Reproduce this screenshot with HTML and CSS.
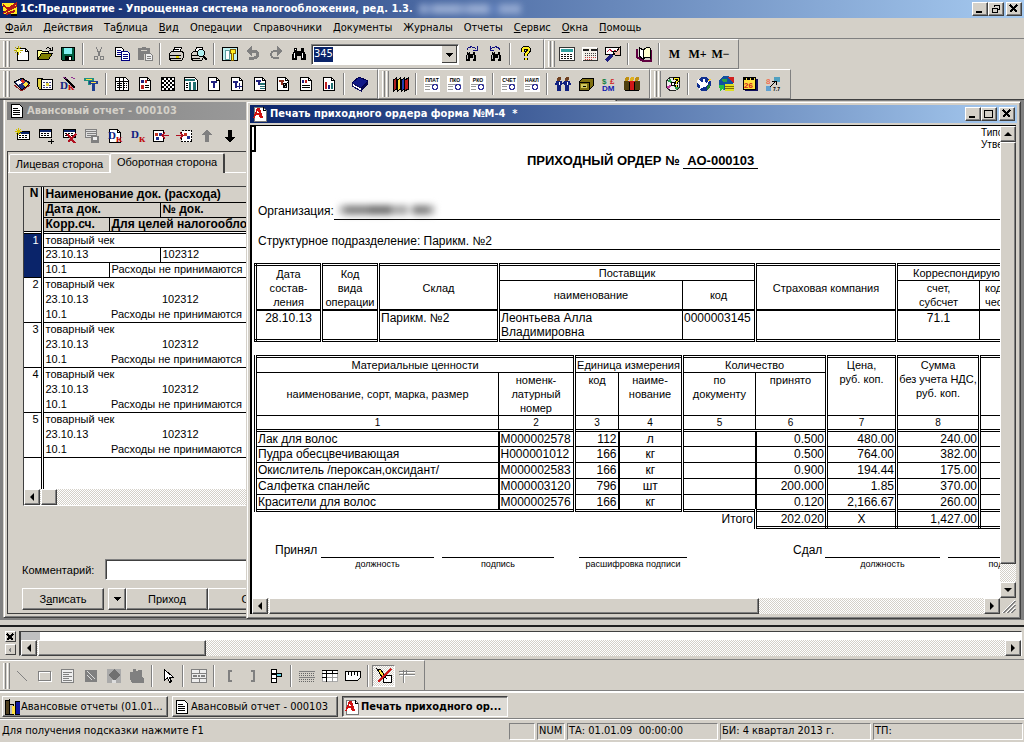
FILE: index.html
```
<!DOCTYPE html>
<html lang="ru">
<head>
    <meta charset="UTF-8">
    <meta name="viewport" content="width=device-width, initial-scale=1.0">
    <title>1С:Предприятие</title>
    <link rel="stylesheet" href="styles.css">
</head>
<body>
    <!-- Shared icon shapes -->
    <svg class="defs" aria-hidden="true">
        <symbol id="page" viewBox="0 0 16 16"><path d="M2.500 1.500h8l3 3v10h-11z" fill="#fff" stroke="#000"/><path d="M10.500 1.500v3h3" fill="none" stroke="#000"/></symbol>
        <symbol id="binoc" viewBox="0 0 16 16"><path d="M3 2h3v3h4V2h3v3l2 4v5h-5v-4H6v4H1V9l2-4z" fill="#000"/><path d="M3 7v5M11 7v5M4.500 3v1" stroke="#fff"/></symbol>
        <symbol id="acc" viewBox="0 0 16 16"><path d="M2 1h9l3 3v11H2z" fill="#fff" stroke="#777"/><path d="M1 12 5 2h3l3 10H8l-1-3H4l-1 3z" fill="#d01010"/><path d="M5 7h2L6 4z" fill="#fff"/><path d="M11 1v3h3" fill="none" stroke="#000"/></symbol>
        <symbol id="lines" viewBox="0 0 16 16"><path d="M2.500 1.500h8l3 3v10h-11z" fill="#fff" stroke="#000"/><path d="M4 5.500h5M4 7.500h7M4 9.500h7M4 11.500h7" stroke="#000"/></symbol>
        <symbol id="rows" viewBox="0 0 16 16"><path d="M2.500 3.500h12v8h-12z" fill="#fff" stroke="#000"/><path d="M3 4.500h11" stroke="#0a246a" stroke-width="2"/><path d="M4 7.500h9M4 9.500h9" stroke="#000" stroke-dasharray="2 1"/></symbol>
        <symbol id="form" viewBox="0 0 16 16"><path d="M0 0h16v16H0z" fill="#fff"/><path d="M1 8.500h13M1 10.500h5M1 13.500h5" stroke="#999"/><circle cx="11" cy="11" r="2.500" fill="#fff" stroke="#33339a" stroke-width="1.500"/></symbol>
    </svg>

    <!-- Main title -->
    <header class="titlebar main-title">
        <svg class="ico" viewBox="0 0 16 16"><path d="M0 2h15v11H2z" fill="#ffe920"/><path d="m1 4 5 4 9-6M1 12l6-3 8-4M4 13l9-3" stroke="#b01818" stroke-width="2" fill="none"/><path d="M9 14h6" stroke="#000" stroke-width="2"/></svg>
        <h1>1С:Предприятие - Упрощенная система налогообложения, ред. 1.3.</h1>
        <span class="smudge light"></span>
        <div class="win-btns">
            <button aria-label="Свернуть"><svg viewBox="0 0 12 10"><path d="M2 8h6" stroke="#000" stroke-width="2"/></svg></button>
            <button aria-label="Восстановить"><svg viewBox="0 0 12 10"><path d="M4.500 3V1.500h5v4H8M4 1.500h6" stroke="#000" fill="none"/><path d="M2.500 4.500h5v4h-5zM2 4h6" stroke="#000" fill="none"/></svg></button>
            <button class="close" aria-label="Закрыть"><svg viewBox="0 0 12 10"><path d="m2 1 7 7M9 1 2 8" stroke="#000" stroke-width="2"/></svg></button>
        </div>
    </header>

    <nav class="menu">
        <a href="#"><u>Ф</u>айл</a>
        <a href="#"><u>Д</u>ействия</a>
        <a href="#">Та<u>б</u>лица</a>
        <a href="#"><u>В</u>ид</a>
        <a href="#">Опе<u>р</u>ации</a>
        <a href="#">Справочники</a>
        <a href="#">Документы</a>
        <a href="#">Журналы</a>
        <a href="#">Отчеты</a>
        <a href="#"><u>С</u>ервис</a>
        <a href="#"><u>О</u>кна</a>
        <a href="#"><u>П</u>омощь</a>
    </nav>

    <!-- Standard toolbar -->
    <div class="toolbar">
        <div class="band">
            <i class="grip"></i>
            <button aria-label="Новый"><svg viewBox="0 0 16 16"><path d="M3.500 2.500h8l3 3v9h-11z" fill="#fff" stroke="#000"/><path d="M11.500 2.500v3h3" fill="none" stroke="#000"/><path d="M4 0v9M0 4h9M1 1l6 6M7 1 1 7" stroke="#b8a800"/><path d="M3 3h3v3H3z" fill="#ffff60"/></svg></button>
            <button aria-label="Открыть"><svg viewBox="0 0 16 16"><path d="M0.500 13.500v-9h4l1 1h6v2" fill="#ffff90" stroke="#000"/><path d="m0.500 13.500 4-6h11l-4 6z" fill="#808000" stroke="#000"/><path d="M9 3c1-2 4-2 5 1m1-3v3h-3" fill="none" stroke="#000"/></svg></button>
            <button aria-label="Сохранить"><svg viewBox="0 0 16 16"><path d="M1.500 1.500h13v13h-12l-1-1z" fill="#006040" stroke="#000"/><path d="M4 2h8v6H4z" fill="#80f0f0"/><path d="M5 10h7v4H5z" fill="#000"/><path d="M9 11h2v3H9z" fill="#fff"/></svg></button>
            <i class="sep"></i>
            <button aria-label="Вырезать"><svg viewBox="0 0 16 16" fill="none" stroke="#808080"><path d="m5 1 4 9M11 1 7 10"/><circle cx="5" cy="12" r="2"/><circle cx="11" cy="12" r="2"/></svg></button>
            <button aria-label="Копировать"><svg viewBox="0 0 16 16" fill="#fff" stroke="#000080"><path d="M1.500 1.500h6l2 2v7h-8z" stroke="#000"/><path d="M3 4.500h4M3 6.500h4M3 8.500h4"/><path d="M7.500 5.500h6l2 2v7h-8z"/><path d="M9 8.500h5M9 10.500h5M9 12.500h5"/></svg></button>
            <button aria-label="Вставить"><svg viewBox="0 0 16 16"><path d="M1 2h4V1h4v1h4v6H7v6H1z" fill="#808080"/><path d="M4 4h6" stroke="#d4d0c8"/><path d="M8.500 7.500h5l2 2v5h-7z" fill="#eee" stroke="#808080"/><path d="M10 10.500h4M10 12.500h4" stroke="#808080"/></svg></button>
            <i class="sep"></i>
            <button aria-label="Печать"><svg viewBox="0 0 16 16"><path d="M4.500 6.500l2-5h7l-2 5z" fill="#fff" stroke="#000"/><path d="M1.500 7.500l2-2h11l1 2v4l-2 3h-11l-1-2z" fill="#d4d0c8" stroke="#000"/><path d="M1 9.500h12M2 12.500h11M6 3.500h5" stroke="#000"/><path d="M8 11h3" stroke="#e0d000" stroke-width="2"/></svg></button>
            <button aria-label="Просмотр"><svg viewBox="0 0 16 16"><path d="M3.500 6.500l2-5h6l-2 5z" fill="#fff" stroke="#000"/><path d="M0.500 7.500l2-2h9l1 2v4l-2 3h-9l-1-2z" fill="#d4d0c8" stroke="#000"/><path d="M0 9.500h7M1 12.500h8" stroke="#000"/><circle cx="10" cy="7" r="3.500" fill="#b0f0f0" stroke="#000"/><path d="m12 10 4 4" stroke="#000" stroke-width="2"/></svg></button>
            <i class="sep"></i>
            <button aria-label="Свойства"><svg viewBox="0 0 16 16"><path d="M0.500 1.500h15v13h-15z" fill="#c0f0f0" stroke="#000"/><path d="M3 4h4v9H3z" fill="#fff" stroke="#60a0a0"/><path d="M8 3h5v4h-2v7H9V7H8z" fill="#ffee20" stroke="#806000"/></svg></button>
            <button aria-label="Отменить"><svg viewBox="0 0 16 16"><path d="M3 5h6c5 0 5 7 0 7H4" fill="none" stroke="#808080" stroke-width="3"/><path d="M7 0v10L1 5z" fill="#808080"/></svg></button>
            <button aria-label="Повторить"><svg viewBox="0 0 16 16"><path d="M12 5H7c-5 0-5 7 0 7h4" fill="none" stroke="#808080" stroke-width="2"/><path d="M9 0v10l6-5z" fill="#808080"/></svg></button>
            <button aria-label="Найти"><svg viewBox="0 0 16 16"><use href="#binoc"/></svg></button>
            <select class="find" aria-label="Поиск"><option>345</option></select>
            <button aria-label="Найти следующий"><svg viewBox="0 0 16 16"><use href="#binoc" x="1" y="4" width="12" height="12"/><path d="M3 4c1-4 7-4 9-1m1-3v4H9" fill="none" stroke="#101080"/></svg></button>
            <button aria-label="Найти предыдущий"><svg viewBox="0 0 16 16"><use href="#binoc" x="3" y="4" width="12" height="12"/><path d="M13 4C12 0 6 0 4 3M3 0v4h4" fill="none" stroke="#101080"/></svg></button>
            <i class="sep"></i>
            <button aria-label="Справка"><svg viewBox="0 0 16 16"><path d="M5 6V4c0-3 6-3 6 0 0 2-3 2-3 5v1M8 12v2" fill="none" stroke="#000" stroke-width="4"/><path d="M5 6V4c0-3 6-3 6 0 0 2-3 2-3 5v1M8 12v2" fill="none" stroke="#ffee20" stroke-width="2"/></svg></button>
        </div>
        <div class="band">
            <i class="grip"></i>
            <button aria-label="Калькулятор"><svg viewBox="0 0 16 16"><path d="M0.500 1.500h15v13h-15z" fill="#fff" stroke="#333"/><path d="M2 3h12v3H2z" fill="#30a0a0"/><path d="M2 8.500h12M2 10.500h12M2 12.500h12" stroke="#111" stroke-dasharray="2 1"/></svg></button>
            <button aria-label="Календарь"><svg viewBox="0 0 16 16"><path d="M0.500 1.500h14v13h-14z" fill="#f4f0e8" stroke="#fff"/><path d="M1 14.500h14.500V2" fill="none" stroke="#333"/><path d="M1 4h6M9 4h6" stroke="#222" stroke-width="2"/><path d="M3 7.500h11M3 9.500h11" stroke="#444" stroke-dasharray="1 1"/><path d="M3 11.500h11M3 13.500h8" stroke="#c04040" stroke-dasharray="1 1"/></svg></button>
            <button aria-label="Табло"><svg viewBox="0 0 16 16"><path d="M0.500 1.500h15v7h-15z" fill="#fff" stroke="#000"/><path d="m2 6 3-3 2 3 4-2" stroke="#c02040" fill="none"/><path d="m1 15 6-6" stroke="#202080" stroke-width="3"/><path d="M7 5h5l3-4v8h-5z" fill="#eebbaa" stroke="#000"/></svg></button>
            <i class="sep"></i>
            <button aria-label="Описание"><svg viewBox="0 0 16 16"><path d="M1 3v8l6 4h8V4" fill="none" stroke="#600040" stroke-width="2"/><path d="M7 13V4L3 1v9z" fill="#fff" stroke="#000"/><path d="M7 13c2-2 4-2 7-1V2c-3-1-5 0-7 2z" fill="#ffffd0" stroke="#000"/></svg></button>
            <i class="sep"></i>
            <button class="mem">M</button>
            <button class="mem">M+</button>
            <button class="mem">M−</button>
        </div>
    </div>

    <!-- Application toolbar -->
    <div class="toolbar">
        <div class="band">
            <i class="grip"></i>
            <button aria-label="Операции"><svg viewBox="0 0 16 16"><path d="m0 6 8-4 8 5-8 7z" fill="#203080" stroke="#000"/><path d="m2 6 4-2 2 3-4 2z" fill="#fff"/><path d="m8 3 3 2-2 2-3-2z" fill="#e03020"/><path d="m9 8 3-2 3 2-4 3z" fill="#ffe040"/><path d="m0 9 8 6 8-6" stroke="#902020" fill="none"/></svg></button>
            <button aria-label="Проводки"><svg viewBox="0 0 16 16"><path d="M0.500 2.500h5v11h-3l-2-3z" fill="#e0d040" stroke="#000"/><path d="M4.500 3.500h11v10h-11z" fill="#fff" stroke="#000"/><path d="M6 6.500h9M6 9.500h9M6 11.500h9" stroke="#404080" stroke-dasharray="2 1"/><path d="M9 7h3v3H9z" fill="#e0d040"/></svg></button>
            <button aria-label="Дебет-кредит"><svg viewBox="0 0 16 16"><text x="0" y="13" class="dk" fill="#102080">D</text><text x="8" y="14" class="dk" fill="#c01010">к</text><path d="m5 2 10 10" stroke="#000" stroke-width="2"/><path d="m3 1 4 2M11 1l4 2" stroke="#903090"/></svg></button>
            <button aria-label="Счета"><svg viewBox="0 0 16 16"><path d="M1 2h10v3H8v4H5V5H1z" fill="#209080"/><path d="M6 5h9v3h-3v7H9V8H6z" fill="#204090"/><path d="M3 3h6M8 6h5" stroke="#ffe040"/></svg></button>
            <i class="sep"></i>
            <button aria-label="Отчет 1"><svg viewBox="0 0 16 16"><path d="M1.500 1.500h10l3 3v10h-13z" fill="#fff" stroke="#000"/><path d="M2 5.500h12M5.500 2v12M9.500 2v12" stroke="#000"/><path d="M3 7.500h10M3 9.500h10M3 11.500h10" stroke="#000" stroke-dasharray="2 1"/></svg></button>
            <button aria-label="Отчет 2"><svg viewBox="0 0 16 16"><use href="#page"/><path d="M4 4h3v3H4z" fill="#202080"/><path d="M8 4h2v3H8zM4 9h3v4H4z" fill="#c02020"/><path d="M8 9.500h4M8 11.500h4" stroke="#000"/></svg></button>
            <button aria-label="Отчет 3"><svg viewBox="0 0 16 16"><path d="M1.500 1.500h13v13h-13z" fill="#fff" stroke="#000"/><path d="M2 3h12M2 7h12M2 11h12" stroke="#000" stroke-width="2" stroke-dasharray="2 2"/><path d="M4 5h10M4 9h10M4 13h10" stroke="#000" stroke-width="2" stroke-dasharray="2 2"/></svg></button>
            <button aria-label="Отчет 4"><svg viewBox="0 0 16 16"><path d="M1.500 1.500h10l3 3v10h-13z" fill="#fff" stroke="#000"/><path d="M2 3h10v2H2z" fill="#207070"/><path d="M6 6h2v8H6zM10 6h3v8h-3z" fill="#207070"/><path d="M3 7.500h2M3 9.500h2M3 11.500h2" stroke="#000"/></svg></button>
            <button aria-label="Отчет 5"><svg viewBox="0 0 16 16"><use href="#page"/><path d="M5 6h6M8 5v7" stroke="#202080" stroke-width="2"/></svg></button>
            <button aria-label="Отчет 6"><svg viewBox="0 0 16 16"><use href="#page"/><path d="M4 6h5M6.500 5v7" stroke="#202080" stroke-width="2"/><path d="M8 10.500h5M10.500 7v6" stroke="#202080"/></svg></button>
            <button aria-label="Отчет 7"><svg viewBox="0 0 16 16"><use href="#page"/><path d="M4 5h5M6.500 4v5" stroke="#202080" stroke-width="2"/><path d="M8 7h5v6H8z" fill="#207070"/><path d="M8 9.500h5M8 11.500h5" stroke="#fff"/></svg></button>
            <button aria-label="Отчет 8"><svg viewBox="0 0 16 16"><use href="#page"/><path d="M4 5h5M6.500 4v5" stroke="#903020" stroke-width="2"/><path d="M8 7h3v4H8zM8 12l5-6" stroke="#000" fill="#bbb"/></svg></button>
            <button aria-label="Отчет 9"><svg viewBox="0 0 16 16"><use href="#page"/><path d="M4 4h2v3H4z" fill="#202080"/><path d="M7 4h2v3H7z" fill="#c02020"/><path d="M4 9.500h8M4 11.500h8" stroke="#000"/></svg></button>
            <button aria-label="Диаграмма"><svg viewBox="0 0 16 16"><use href="#page"/><path d="M5 6v7" stroke="#c02020" stroke-width="2"/><path d="M8 9v4" stroke="#202080" stroke-width="2"/><path d="M11 7v6" stroke="#207070" stroke-width="2"/></svg></button>
            <i class="sep"></i>
            <button aria-label="Книга"><svg viewBox="0 0 16 16"><path d="m0 7 7-6 9 4-7 7z" fill="#101888" stroke="#000050"/><path d="M0 7v3l9 5v-3z" fill="#fff" stroke="#101060"/><path d="m9 12 7-7v3l-7 7z" fill="#080850"/></svg></button>
        </div>
        <div class="band">
            <i class="grip"></i>
            <button aria-label="Журналы"><svg viewBox="0 0 16 16" stroke="#000"><path d="m0.500 4 3-2v11l-3 2z" fill="#b02020"/><path d="m4.500 4 3-2v11l-3 2z" fill="#ffe040"/><path d="m8.500 4 3-2v11l-3 2z" fill="#2040b0"/><path d="m11.500 4 4-2v11l-4 2z" fill="#c01818"/></svg></button>
            <i class="sep"></i>
            <button aria-label="Платежное поручение"><svg viewBox="0 0 16 16"><use href="#form"/><text x="8" y="6" class="tiny">ПЛАТ</text></svg></button>
            <button aria-label="Приходный ордер"><svg viewBox="0 0 16 16"><use href="#form"/><text x="8" y="6" class="tiny">ПКО</text></svg></button>
            <button aria-label="Расходный ордер"><svg viewBox="0 0 16 16"><use href="#form"/><text x="8" y="6" class="tiny">РКО</text></svg></button>
            <i class="sep"></i>
            <button aria-label="Счет"><svg viewBox="0 0 16 16"><use href="#form"/><text x="8" y="6" class="tiny">СЧЕТ</text></svg></button>
            <button aria-label="Накладная"><svg viewBox="0 0 16 16"><use href="#form"/><text x="8" y="6" class="tiny">НАКЛ</text></svg></button>
            <i class="sep"></i>
            <button aria-label="Контрагенты"><svg viewBox="0 0 16 16"><circle cx="4" cy="3" r="2" fill="#704020"/><circle cx="12" cy="3" r="2" fill="#704020"/><path d="M1 5h6l1 3-2 1v6H2V9H0zM9 5h6l1 4h-2v6h-4V9L8 8z" fill="#102080"/><path d="M4.500 6v3M12.500 6v3" stroke="#fff"/></svg></button>
            <button aria-label="Номенклатура"><svg viewBox="0 0 16 16"><path d="m1 6 4-4h10v8l-4 4H1z" fill="#807010" stroke="#000"/><path d="M1 6h10v8" fill="none" stroke="#000"/><path d="M3 8h6v4H3z" fill="#d0c860"/><path d="M5 10h3" stroke="#000"/></svg></button>
            <button aria-label="Валюты"><svg viewBox="0 0 16 16"><text x="1" y="8" class="cur" fill="#108040">$</text><text x="9" y="8" class="cur" fill="#d02020">£</text><text x="1" y="15" class="cur" fill="#1020b0">DM</text></svg></button>
            <button aria-label="Сотрудники"><svg viewBox="0 0 16 16"><circle cx="3" cy="3" r="2" fill="#c09010"/><circle cx="8" cy="3" r="2" fill="#e0b020"/><circle cx="13" cy="3" r="2" fill="#c09010"/><path d="M0 5h5v9H0z" fill="#504010"/><path d="M5 5h6v10H5z" fill="#d01818"/><path d="M11 5h5v9h-5z" fill="#504010"/><path d="M5.500 6v9M10.500 6v9M1 14.500h14" stroke="#000"/></svg></button>
        </div>
        <div class="band">
            <i class="grip"></i>
            <button aria-label="ИТС"><svg viewBox="0 0 16 16"><circle cx="8" cy="8" r="7" fill="#eee" stroke="#222"/><path d="m8 8-6-3 3-3zM8 8l6 3-3 3z" fill="#30a050"/><path d="M8 8 3 13l-1-3z" fill="#c040a0"/><circle cx="8" cy="8" r="2" fill="#fff" stroke="#000"/><path d="M9 4V2h4v3l-2 1v2M11 9v2" fill="none" stroke="#000" stroke-width="3"/><path d="M9 4V2h4v3l-2 1v2M11 9v2" fill="none" stroke="#ffee20"/></svg></button>
            <i class="sep"></i>
            <button aria-label="Интернет"><svg viewBox="0 0 16 16"><circle cx="8" cy="8" r="7" fill="#103090"/><path d="m2 2 4 5 2-5 2 5 3-2-2 5-3 1-5 3 1-4-3-3z" fill="#fff"/><path d="m11 10 3-2v3l-3 3z" fill="#208030"/><path d="m11 4 4-1-2 3z" fill="#ffd020"/></svg></button>
            <button aria-label="Обмен"><svg viewBox="0 0 16 16"><circle cx="7" cy="7" r="7" fill="#1050a0"/><path d="M3 3h5v3H4z" fill="#30a040"/><path d="M9 1h6v7z" fill="#d02020"/><path d="M6 8h9v7H6z" fill="#e0e020"/><path d="M6 10.500h9M6 12.500h9" stroke="#807000"/><path d="M0 9h5v6l-2-2-2 2z" fill="#20c040"/></svg></button>
            <button aria-label="Календарь бухгалтера"><svg viewBox="0 0 16 16"><path d="M3 3h13v12H3z" fill="#101060"/><path d="M1.500 1.500h12v12h-12z" fill="#ffe040" stroke="#000"/><path d="M1 2.500h13" stroke="#000" stroke-width="3" stroke-dasharray="3 1"/><text x="2" y="12" class="cur" fill="#d02020">26</text></svg></button>
            <button aria-label="Переход на 8"><svg viewBox="0 0 16 16"><text x="1" y="8" class="cur" fill="#f07050">8</text><path d="M9 1h6v5H9z" fill="#50a0c0"/><path d="M1 10h5v5H1z" fill="#60a0d0"/><path d="m5 11 6-6m0 4V5H7" stroke="#000" fill="none"/><text x="8" y="15" class="tiny left">7.7</text></svg></button>
        </div>
    </div>

    <!-- Child windows -->
    <main class="mdi">
        <section class="window win-report">
            <header class="titlebar inactive">
                <svg class="ico" viewBox="0 0 16 16"><use href="#lines"/></svg>
                <h2>Авансовый отчет - 000103</h2>
            </header>
            <div class="win-tools">
                <button aria-label="Новая строка"><svg viewBox="0 0 16 16"><use href="#rows"/><path d="M3.500 0v7M0 3.500h7M1 1l5 5M6 1 1 6" stroke="#d0c000"/></svg></button>
                <button aria-label="Добавить"><svg viewBox="0 0 16 16"><use href="#rows" x="-1" y="-2" width="16" height="16"/><path d="M10 13.500h6M13.500 11v5" stroke="#000"/></svg></button>
                <button aria-label="Удалить"><svg viewBox="0 0 16 16"><use href="#rows" y="-2" width="16" height="16"/><path d="m6 6 8 9M15 6 7 14" stroke="#b01020" stroke-width="2"/></svg></button>
                <button aria-label="Записать строку"><svg viewBox="0 0 16 16"><path d="M1.500 1.500h11v8h-11z" fill="#ddd" stroke="#808080"/><path d="M2 3h10M3 5.500h9M3 7.500h9" stroke="#808080"/><path d="M7 8h8v7H7z" fill="#808080"/><path d="M9 9h4v3H9z" fill="#eee"/></svg></button>
                <button aria-label="Проводки документа"><svg viewBox="0 0 16 16"><use href="#page"/><text x="1" y="11" class="dk" fill="#102080">D</text><text x="9" y="14" class="dk" fill="#c01010">к</text></svg></button>
                <button aria-label="Дт Кт"><svg viewBox="0 0 16 16"><text x="1" y="10" class="dk" fill="#102080">D</text><text x="9" y="14" class="dk" fill="#c01010">к</text></svg></button>
                <button aria-label="Подбор"><svg viewBox="0 0 16 16"><path d="M0.500 2.500h10v11h-10z" fill="#fff" stroke="#000"/><path d="M2 5h3v3H2z" fill="#c03020"/><path d="M6 5h3v3H6zM3 9h3v3H3z" fill="#203090"/><path d="M16 7.500H9m3-3-3 3 3 3" stroke="#b01020" fill="none"/></svg></button>
                <button aria-label="Вставить из"><svg viewBox="0 0 16 16"><path d="M5.500 2.500h10v11h-10z" fill="#fff" stroke="#000" stroke-dasharray="2 1"/><path d="M8 5h3v3H8z" fill="#c03020"/><path d="M11 8h3v3h-3z" fill="#203090"/><path d="M0 7.500h7m-3-3 3 3-3 3" stroke="#b01020" fill="none"/></svg></button>
                <button aria-label="Вверх"><svg viewBox="0 0 16 16"><path d="m8 1 5 6h-3v7H6V7H3z" fill="#808080"/></svg></button>
                <button aria-label="Вниз"><svg viewBox="0 0 16 16"><path d="m8 15 5-6h-3V2H6v7H3z" fill="#000"/></svg></button>
            </div>
            <div class="form-body">
                <div class="tabs">
                    <button class="tab">Лицевая сторона</button>
                    <button class="tab active">Оборотная сторона</button>
                </div>
                <div class="grid">
                    <table>
                        <colgroup><col class="g-n"><col class="g-acc"><col class="g-date"><col></colgroup>
                        <thead>
                            <tr><th class="num" rowspan="3">N</th><th colspan="3">Наименование док. (расхода)</th></tr>
                            <tr><th colspan="2">Дата док.</th><th>№ док.</th></tr>
                            <tr><th>Корр.сч.</th><th colspan="2">Для целей налогообложения</th></tr>
                        </thead>
                        <tbody class="current">
                            <tr><td class="num" rowspan="3">1</td><td colspan="3">товарный чек</td></tr>
                            <tr><td colspan="2">23.10.13</td><td>102312</td></tr>
                            <tr><td>10.1</td><td colspan="2">Расходы не принимаются</td></tr>
                        </tbody>
                        <tbody>
                            <tr><td class="num" rowspan="3">2</td><td colspan="3">товарный чек</td></tr>
                            <tr><td colspan="2">23.10.13</td><td>102312</td></tr>
                            <tr><td>10.1</td><td colspan="2">Расходы не принимаются</td></tr>
                        </tbody>
                        <tbody>
                            <tr><td class="num" rowspan="3">3</td><td colspan="3">товарный чек</td></tr>
                            <tr><td colspan="2">23.10.13</td><td>102312</td></tr>
                            <tr><td>10.1</td><td colspan="2">Расходы не принимаются</td></tr>
                        </tbody>
                        <tbody>
                            <tr><td class="num" rowspan="3">4</td><td colspan="3">товарный чек</td></tr>
                            <tr><td colspan="2">23.10.13</td><td>102312</td></tr>
                            <tr><td>10.1</td><td colspan="2">Расходы не принимаются</td></tr>
                        </tbody>
                        <tbody>
                            <tr><td class="num" rowspan="3">5</td><td colspan="3">товарный чек</td></tr>
                            <tr><td colspan="2">23.10.13</td><td>102312</td></tr>
                            <tr><td>10.1</td><td colspan="2">Расходы не принимаются</td></tr>
                        </tbody>
                        <tbody class="rest"><tr><td class="num"></td><td colspan="3"></td></tr></tbody>
                    </table>
                    <div class="hscroll"><button class="arr left" aria-label="Влево"></button><i class="thumb small"></i></div>
                </div>
                <div class="comment">
                    <label for="comment">Комментарий:</label>
                    <input type="text" id="comment">
                </div>
                <div class="actions">
                    <button class="btn">З<u>а</u>писать</button>
                    <button class="btn drop" aria-label="Еще"></button>
                    <button class="btn">Приход</button>
                    <button class="btn">ОК</button>
                </div>
            </div>
        </section>

        <section class="window win-print">
            <header class="titlebar">
                <svg class="ico" viewBox="0 0 16 16"><use href="#acc"/></svg>
                <h2>Печать приходного ордера форма №М-4 &nbsp;*</h2>
                <div class="win-btns">
                    <button aria-label="Свернуть"><svg viewBox="0 0 12 10"><path d="M2 8h6" stroke="#000" stroke-width="2"/></svg></button>
                    <button aria-label="Развернуть"><svg viewBox="0 0 12 10"><path d="M1.500 1.500h8v7h-8zM1 1h9" stroke="#000" fill="none"/></svg></button>
                    <button class="close" aria-label="Закрыть"><svg viewBox="0 0 12 10"><path d="m2 1 7 7M9 1 2 8" stroke="#000" stroke-width="2"/></svg></button>
                </div>
            </header>
            <div class="pane">
                <div class="sheet">
                    <i class="cursor"></i>
                    <p class="approved">Типовая межотраслевая форма № М-4<br>Утверждена постановлением</p>
                    <h3>ПРИХОДНЫЙ ОРДЕР № <span>АО-000103</span></h3>
                    <div class="field org"><span>Организация:</span><b><i class="smudge dark"></i></b></div>
                    <div class="field"><span>Структурное подразделени</span><b>е: Парикм. №2</b></div>

                    <table class="doc supplier">
                        <colgroup><col class="w66"><col class="w57"><col class="w120"><col class="w184"><col class="w73"><col class="w141"><col class="w83"><col class="w120"></colgroup>
                        <thead>
                            <tr>
                                <th rowspan="2">Дата<br>состав-<br>ления</th>
                                <th rowspan="2">Код<br>вида<br>операции</th>
                                <th rowspan="2">Склад</th>
                                <th colspan="2">Поставщик</th>
                                <th rowspan="2">Страховая компания</th>
                                <th colspan="2" class="cut">Корреспондирующий счет</th>
                            </tr>
                            <tr><th class="thin">наименование</th><th>код</th><th class="thin">счет,<br>субсчет</th><th class="cut edge">код аналити-<br>ческого учета</th></tr>
                        </thead>
                        <tbody>
                            <tr><td class="c">28.10.13</td><td></td><td>Парикм. №2</td><td class="thin">Леонтьева Алла<br>Владимировна</td><td>0000003145</td><td></td><td class="c thin">71.1</td><td></td></tr>
                        </tbody>
                    </table>

                    <table class="doc goods">
                        <colgroup><col class="w243"><col class="w76"><col class="w44"><col class="w64"><col class="w73"><col class="w71"><col class="w70"><col class="w83"><col class="w120"></colgroup>
                        <thead>
                            <tr class="h1">
                                <th colspan="2">Материальные ценности</th>
                                <th colspan="2">Единица измерения</th>
                                <th colspan="2">Количество</th>
                                <th rowspan="2" class="top">Цена,<br>руб. коп.</th>
                                <th rowspan="2" class="top">Сумма<br>без учета НДС,<br>руб. коп.</th>
                                <th rowspan="2"></th>
                            </tr>
                            <tr class="h2">
                                <th class="thin">наименование, сорт, марка, размер</th>
                                <th>номенк-<br>латурный<br>номер</th>
                                <th class="thin top">код</th>
                                <th class="top">наиме-<br>нование</th>
                                <th class="thin top">по<br>документу</th>
                                <th class="top">принято</th>
                            </tr>
                            <tr class="nums"><th class="thin">1</th><th>2</th><th class="thin">3</th><th>4</th><th class="thin">5</th><th>6</th><th>7</th><th>8</th><th></th></tr>
                        </thead>
                        <tbody>
                            <tr><td class="thick">Лак для волос</td><td>M000002578</td><td class="r thick">112</td><td class="c">л</td><td class="thick"></td><td class="r">0.500</td><td class="r">480.00</td><td class="r">240.00</td><td></td></tr>
                            <tr><td class="thick">Пудра обесцвечивающая</td><td>Н000001012</td><td class="r thick">166</td><td class="c">кг</td><td class="thick"></td><td class="r">0.500</td><td class="r">764.00</td><td class="r">382.00</td><td></td></tr>
                            <tr><td class="thick">Окислитель /пероксан,оксидант/</td><td>M000002583</td><td class="r thick">166</td><td class="c">кг</td><td class="thick"></td><td class="r">0.900</td><td class="r">194.44</td><td class="r">175.00</td><td></td></tr>
                            <tr><td class="thick">Салфетка спанлейс</td><td>M000003120</td><td class="r thick">796</td><td class="c">шт</td><td class="thick"></td><td class="r">200.000</td><td class="r">1.85</td><td class="r">370.00</td><td></td></tr>
                            <tr><td class="thick">Красители для волос</td><td>M000002576</td><td class="r thick">166</td><td class="c">кг</td><td class="thick"></td><td class="r">0.120</td><td class="r">2,166.67</td><td class="r">260.00</td><td></td></tr>
                        </tbody>
                        <tfoot>
                            <tr><td class="r total" colspan="5">Итого</td><td class="r">202.020</td><td class="c">X</td><td class="r">1,427.00</td><td></td></tr>
                        </tfoot>
                    </table>

                    <div class="signs">
                        <span class="who">Принял</span>
                        <span class="sign s1">должность</span>
                        <span class="sign s2">подпись</span>
                        <span class="sign s3">расшифровка подписи</span>
                        <span class="who give">Сдал</span>
                        <span class="sign s4">должность</span>
                        <span class="sign s5">подпись</span>
                    </div>
                </div>
                <div class="vscroll"><button class="arr up" aria-label="Вверх"></button><i class="thumb"></i><button class="arr down" aria-label="Вниз"></button></div>
                <div class="hscroll"><button class="arr left" aria-label="Влево"></button><i class="thumb"></i><button class="arr right" aria-label="Вправо"></button></div>
                <svg class="resize" viewBox="0 0 16 16"><path d="M3 15 15 3M7 15l8-8M11 15l4-4" stroke="#808080" stroke-width="2"/><path d="M2 15 15 2M6 15l9-9M10 15l5-5" stroke="#fff"/></svg>
            </div>
        </section>
    </main>

    <!-- Message panel -->
    <div class="messages">
        <div class="dock-btns"><button aria-label="Закрыть панель"><svg viewBox="0 0 8 8"><path d="m1 1 6 6M7 1 1 7" stroke="#000" stroke-width="2"/></svg></button><button aria-label="Свернуть панель"><svg viewBox="0 0 8 8"><path d="M5 1v6L2 4z" fill="#808080"/></svg></button></div>
        <div class="log">
            <div class="line"></div>
            <div class="hscroll"><button class="arr left" aria-label="Влево"></button><i class="thumb"></i><button class="arr right" aria-label="Вправо"></button></div>
        </div>
    </div>

    <!-- Drawing toolbar -->
    <div class="toolbar drawing">
        <div class="band">
            <i class="grip"></i>
            <button aria-label="Линия"><svg viewBox="0 0 16 16"><path d="m3 3 10 10" stroke="#808080"/></svg></button>
            <button aria-label="Прямоугольник"><svg viewBox="0 0 16 16"><path d="M2.500 4.500h12v9h-12z" stroke="#fff" fill="none"/><path d="M1.500 3.500h12v9h-12z" stroke="#808080" fill="none"/></svg></button>
            <button aria-label="Текст"><svg viewBox="0 0 16 16"><path d="M1.500 1.500h12v13h-12z" stroke="#808080" fill="#eee"/><path d="M3 4.500h9M3 6.500h6M3 8.500h9M3 10.500h6M3 12.500h9" stroke="#808080"/></svg></button>
            <button aria-label="Картинка"><svg viewBox="0 0 16 16"><path d="M2 2h12v12H2z" fill="#808080"/><path d="m4 3 8 8M4 7l5 5" stroke="#ddd"/></svg></button>
            <button aria-label="Диаграмма"><svg viewBox="0 0 16 16"><path d="M1 1h14v14H1z" fill="#aaa"/><path d="m8 1 6 6-6 6-6-6z" fill="#707070"/><path d="M6 12h4v3H6z" fill="#ddd"/></svg></button>
            <button aria-label="Объект"><svg viewBox="0 0 16 16"><path d="M1 4h3V1h3v2h2V2h4v6l2 3v4H3l-2-4z" fill="#808080"/></svg></button>
            <i class="sep"></i>
            <button aria-label="Выбор"><svg viewBox="0 0 16 16"><path d="M4.500 1.500v11l3-3 2 5 2-1-2-4h4z" fill="#fff" stroke="#000"/></svg></button>
            <i class="sep"></i>
            <button aria-label="Объединить"><svg viewBox="0 0 16 16"><path d="M0.500 1.500h15v13h-15zM0 5.500h16M0 10.500h16M8 1v4M8 11v4" stroke="#808080" fill="#eee"/><path d="M2 8h4M10 8h4M7 8h2" stroke="#808080" stroke-width="2"/></svg></button>
            <i class="sep"></i>
            <button aria-label="Скобка"><svg viewBox="0 0 16 16"><path d="M10 3H7v10h3" stroke="#808080" stroke-width="2" fill="none"/></svg></button>
            <button aria-label="Скобка закрывающая"><svg viewBox="0 0 16 16"><path d="M6 3h3v10H6" stroke="#808080" stroke-width="2" fill="none"/></svg></button>
            <button aria-label="Секции"><svg viewBox="0 0 16 16"><path d="M3.500 1.500h5v4h-5zM3.500 10.500h5v4h-5zM3.500 6.500h5v4h-5z" fill="#fff" stroke="#000"/><path d="M8.500 5.500h5v3h-5z" fill="#60d0e0" stroke="#000"/></svg></button>
            <i class="sep"></i>
            <button aria-label="Сетка"><svg viewBox="0 0 16 16"><path d="M0 3.500h16M0 9.500h16" stroke="#808080"/><path d="M0 5.500h16M0 7.500h16M0 11.500h16M0 13.500h16" stroke="#666" stroke-dasharray="1 1"/></svg></button>
            <button aria-label="Заголовки"><svg viewBox="0 0 16 16"><path d="M0.500 2.500h15v11h-15z" fill="#fff" stroke="#aaa"/><path d="M0 2.500h16M0 5.500h16M4.500 2v12M10.500 2v4M0 9.500h5" stroke="#000"/><path d="M10.500 6v8M5 9.500h11" stroke="#999"/></svg></button>
            <button aria-label="Линейка"><svg viewBox="0 0 16 16"><path d="M0.500 3.500h15v6l-3 3h-12z" fill="#fff" stroke="#000"/><path d="M3.500 4v3M6.500 4v4M9.500 4v3M12.500 4v4" stroke="#000"/></svg></button>
            <i class="sep"></i>
            <button class="pressed" aria-label="Только просмотр"><svg viewBox="0 0 16 16"><path d="M7.500 7.500h8v7h-8z" fill="#fff" stroke="#000"/><path d="m1 1 4 1 5 8-4-1z" fill="#ffe040" stroke="#000"/><path d="M15 1 2 14" stroke="#d01818" stroke-width="2"/></svg></button>
            <button aria-label="Закрепить"><svg viewBox="0 0 16 16"><path d="M1 4.500h15M5.500 3v12M1 7.500h15" stroke="#fff"/><path d="M0 3.500h16M4.500 2v13M0 6.500h16M7.500 2v5" stroke="#808080"/></svg></button>
        </div>
    </div>

    <div class="windows-bar">
        <button class="wtab"><svg class="ico" viewBox="0 0 16 16"><path d="m1 2 4-1v14H1z" fill="#504020" stroke="#000"/><path d="M5 5h4v10H5z" fill="#bbb" stroke="#000"/><path d="M8 7h3v8H8z" fill="#ffe040"/><path d="m11 3 5-1v13h-5z" fill="#1018a0" stroke="#000"/></svg><span>Авансовые отчеты (01.01...</span></button>
        <button class="wtab"><svg class="ico" viewBox="0 0 16 16"><use href="#lines"/></svg><span>Авансовый отчет - 000103</span></button>
        <button class="wtab active"><svg class="ico" viewBox="0 0 16 16"><use href="#acc"/></svg><span>Печать приходного ор...</span></button>
    </div>

    <footer class="status">
        <span class="hint">Для получения подсказки нажмите F1</span>
        <span class="cell c1"></span>
        <span class="cell c2">NUM</span>
        <span class="cell c3">ТА: 01.01.09 &nbsp;00:00:00</span>
        <span class="cell c3">БИ: 4 квартал 2013 г.</span>
        <span class="cell c4">ТП:</span>
    </footer>
</body>
</html>
```
FILE: styles.css
```
/* Reset */
* {
    box-sizing: border-box;
}

body {
    margin: 0;
    height: 100vh;
    display: flex;
    flex-direction: column;
    overflow: hidden;
    background: #d4d0c8;
    color: #000;
    font-family: "DejaVu Sans Condensed", "Noto Sans", sans-serif;
    font-size: 11px;
    line-height: 14px;
    white-space: nowrap;
}

h1, h2, h3, p {
    margin: 0;
    font-size: inherit;
}

button, input, select {
    font: inherit;
    color: inherit;
    margin: 0;
    padding: 0;
    border: 0;
    border-radius: 0;
    background: none;
}

svg {
    display: block;
    width: 16px;
    height: 16px;
    flex: none;
    shape-rendering: crispEdges;
}

.defs {
    position: absolute;
    width: 0;
    height: 0;
}

.tiny {
    font-family: "Liberation Sans", sans-serif;
    font-size: 5px;
    font-weight: bold;
    text-anchor: middle;
}

.tiny.left {
    text-anchor: start;
}

.cur {
    font-family: "Liberation Sans", sans-serif;
    font-size: 8px;
    font-weight: bold;
}

.dk {
    font-family: "Liberation Serif", serif;
    font-size: 11px;
    font-weight: bold;
}

/* Title bars */
.titlebar {
    display: flex;
    align-items: center;
    flex: none;
    height: 18px;
    padding: 0 2px;
    background: linear-gradient(to right, #0a246a, #a6caf0);
    color: #fff;
}

.titlebar.inactive {
    background: linear-gradient(to right, #808080, #c0c0c0);
    color: #d4d0c8;
}

.titlebar .ico {
    margin-right: 2px;
}

.win-btns {
    display: flex;
    margin-left: auto;
}

.win-btns button {
    width: 16px;
    height: 14px;
    border: 1px solid;
    border-color: #fff #404040 #404040 #fff;
    box-shadow: inset -1px -1px #808080;
    background: #d4d0c8;
}

.win-btns svg {
    width: 12px;
    height: 10px;
    margin: 1px;
}

.win-btns .close {
    margin-left: 2px;
}

/* Blurred out names */
.smudge {
    display: inline-block;
    filter: blur(3px);
}

.smudge.light {
    width: 102px;
    height: 10px;
    margin-left: 6px;
    background: linear-gradient(to right, #a9bbdf 0 8px, #8aa1cf 8px 14px, #b4c4e4 14px 40px, #9db1d8 40px 50px, #b4c4e4 50px 70px, #6484c0 70px 80px, #a9bbdf 80px);
    opacity: 0.7;
}

.smudge.dark {
    width: 96px;
    height: 10px;
    margin: 1px 0 0 5px;
    background: linear-gradient(to right, #bbb 0 6px, #888 6px 30px, #777 30px 52px, #aaa 52px 68px, #ddd 68px 74px, #888 74px 90px, #bbb 90px);
}

/* Menu */
.menu {
    display: flex;
    align-items: center;
    height: 21px;
    flex: none;
    border-bottom: 1px solid #808080;
    gap: 11px;
    padding: 0 5px;
}

.menu a {
    color: inherit;
    text-decoration: none;
}

/* Toolbars */
.toolbar {
    display: flex;
    flex: none;
    height: 30px;
}

.band {
    display: flex;
    align-items: center;
    border-top: 1px solid #fff;
    border-right: 1px solid #808080;
    border-bottom: 1px solid #808080;
    padding-right: 6px;
}

.band + .band {
    border-left: 1px solid #fff;
}

.band button {
    width: 23px;
    height: 22px;
    display: flex;
    align-items: center;
    justify-content: center;
}

.band .pressed {
    border: 1px solid;
    border-color: #808080 #fff #fff #808080;
    background: repeating-conic-gradient(#fff 0 25%, #d4d0c8 0 50%) 0 0 / 2px 2px;
}

.band .mem {
    font-family: "Liberation Serif", serif;
    font-size: 12px;
    font-weight: bold;
}

.grip {
    width: 7px;
    height: 26px;
    margin-left: 3px;
    background: linear-gradient(to right, #fff 0 1px, #d4d0c8 1px 2px, #808080 2px 3px, #d4d0c8 3px 4px, #fff 4px 5px, #d4d0c8 5px 6px, #808080 6px);
}

.sep {
    width: 2px;
    height: 22px;
    margin: 0 3px;
    background: linear-gradient(to right, #808080 50%, #fff 50%);
}

.find {
    appearance: none;
    width: 148px;
    height: 21px;
    margin: 0 1px;
    padding: 0 2px;
    border: 1px solid;
    border-color: #808080 #fff #fff #808080;
    box-shadow: inset 1px 1px #404040;
    color: #fff;
    background:
        linear-gradient(#000, #000) right 5px top 8px / 7px 1px no-repeat,
        linear-gradient(#000, #000) right 6px top 9px / 5px 1px no-repeat,
        linear-gradient(#000, #000) right 7px top 10px / 3px 1px no-repeat,
        linear-gradient(#000, #000) right 8px top 11px / 1px 1px no-repeat,
        linear-gradient(#404040, #404040) right 1px top 1px / 1px 17px no-repeat,
        linear-gradient(#404040, #404040) right 1px bottom 1px / 15px 1px no-repeat,
        linear-gradient(#d4d0c8, #d4d0c8) right 1px top 1px / 15px 17px no-repeat,
        linear-gradient(#0a246a, #0a246a) 2px 2px / 19px 15px no-repeat,
        #fff;
}

/* MDI area */
.mdi {
    position: relative;
    flex: 1;
    min-height: 0;
    overflow: hidden;
    background: #808080;
    border-top: 1px solid #404040;
    border-bottom: 5px solid #d4d0c8;
}

.window {
    position: absolute;
    display: flex;
    flex-direction: column;
    background: #d4d0c8;
    border: 1px solid;
    border-color: #d4d0c8 #404040 #404040 #d4d0c8;
    box-shadow: inset 1px 1px #fff, inset -1px -1px #808080;
    padding: 3px;
}

.win-report {
    left: 3px;
    top: -2px;
    bottom: 2px;
    width: 60%;
}

.win-print {
    left: 246px;
    right: 3px;
    top: 1px;
    bottom: 1px;
}

.win-tools {
    display: flex;
    align-items: center;
    height: 31px;
    flex: none;
    padding-left: 4px;
}

.win-tools button {
    width: 23px;
    display: flex;
    justify-content: center;
}

.form-body {
    flex: 1;
    border: 1px solid #404040;
    border-right: 0;
    font-family: "Liberation Sans", sans-serif;
}

.tabs {
    display: flex;
    align-items: flex-end;
    height: 21px;
    padding-left: 1px;
    border-bottom: 1px solid #fff;
}

.tab {
    width: 101px;
    height: 18px;
    border: 1px solid #fff;
    border-bottom: 0;
    border-radius: 2px 2px 0 0;
}

.tab.active {
    width: 115px;
    height: 20px;
    padding-bottom: 3px;
    margin-bottom: -1px;
    border-right: 2px solid #404040;
    background: #d4d0c8;
}

/* Expense grid */
.grid {
    margin: 13px 12px 0 15px;
    border: 1px solid;
    border-color: #404040 #fff #fff #404040;
    background: #fff;
    overflow: hidden;
}

.grid table {
    width: 100%;
    border-collapse: collapse;
    table-layout: fixed;
    line-height: 13px;
}

.g-n {
    width: 18px;
}

.g-acc {
    width: 67px;
}

.g-date {
    width: 51px;
}

.grid td, .grid th {
    height: 15px;
    padding: 0 2px;
    text-align: left;
    overflow: hidden;
}

.grid th {
    border: 1px solid #000;
    border-top: 0;
    border-left: 0;
    background: #d4d0c8;
    font-size: 12px;
}

.grid .num {
    vertical-align: top;
    text-align: right;
    border-right: 3px double #000;
}

.grid tbody {
    border-bottom: 1px solid #000;
}

.grid thead {
    border-bottom: 3px double #000;
}

.grid .current td {
    border: 1px solid #000;
    border-left: 0;
}

.grid .current .num {
    background: #0a246a;
    color: #fff;
    border-right: 3px double #000;
}

.grid .rest {
    border-bottom: 0;
}

.grid .rest td {
    height: 32px;
}

.comment {
    display: flex;
    align-items: center;
    margin: 53px 12px 0 14px;
}

.comment label {
    width: 83px;
}

.comment input {
    flex: 1;
    height: 21px;
    background: #fff;
    border: 1px solid;
    border-color: #808080 #fff #fff #808080;
    box-shadow: inset 1px 1px #404040;
}

.actions {
    display: flex;
    margin: 8px 0 0 14px;
}

.btn {
    width: 82px;
    height: 22px;
    border: 1px solid;
    border-color: #fff #404040 #404040 #fff;
    box-shadow: inset -1px -1px #808080;
}

.btn.drop {
    width: 18px;
    margin-left: 4px;
    background: conic-gradient(from -45deg at 50% 100%, #000 90deg, transparent 0) center / 7px 4px no-repeat;
}

/* Scroll bars */
.hscroll, .vscroll {
    display: flex;
    background: repeating-conic-gradient(#fff 0 25%, #d4d0c8 0 50%) 0 0 / 2px 2px;
}

.hscroll {
    height: 16px;
}

.vscroll {
    width: 16px;
    flex-direction: column;
}

.arr, .thumb {
    display: flex;
    align-items: center;
    justify-content: center;
    flex: none;
    width: 16px;
    height: 16px;
    border: 1px solid;
    border-color: #fff #404040 #404040 #fff;
    box-shadow: inset -1px -1px #808080;
    background: #d4d0c8;
}

.arr::before {
    content: "";
    border: 4px solid transparent;
}

.arr.left::before {
    border-left-width: 0;
    border-right-color: #000;
}

.arr.right::before {
    border-right-width: 0;
    border-left-color: #000;
}

.arr.up::before {
    border-top-width: 0;
    border-bottom-color: #000;
}

.arr.down::before {
    border-bottom-width: 0;
    border-top-color: #000;
}

.arr.right {
    margin-left: auto;
}

.arr.down {
    margin-top: auto;
}

.hscroll .thumb {
    margin-left: 1px;
}

/* Print form */
.pane {
    flex: 1;
    min-height: 0;
    display: grid;
    grid-template: 1fr 16px / 1fr 16px;
    margin: 2px 1px 1px 0;
    border-top: 1px solid #000;
    border-left: 2px solid #000;
}

.vscroll .thumb {
    flex: 0 1 422px;
}

.pane .hscroll .thumb {
    flex: 0 1 490px;
}

.sheet {
    position: relative;
    overflow: hidden;
    background: #fff;
    padding-left: 2px;
    font-family: "Liberation Sans", sans-serif;
    font-size: 12px;
}

.cursor {
    position: absolute;
    left: 0;
    top: 0;
    width: 4px;
    height: 26px;
    border: 1px solid #000;
    border-width: 1px 2px 2px 0;
}

.approved {
    padding: 1px 0 0 727px;
    font-size: 10px;
    line-height: 12px;
}

.sheet h3 {
    margin: 2px 0 0 273px;
    font-size: 13px;
    line-height: 15px;
}

.sheet h3 span {
    padding: 0 4px;
    border-bottom: 1px solid #000;
}

.field {
    display: flex;
    margin-top: 13px;
    padding-left: 4px;
    line-height: 16px;
}

.field.org {
    margin-top: 35px;
}

.field b {
    flex: 1;
    font-weight: normal;
    border-bottom: 1px solid #000;
}

.doc {
    border-collapse: collapse;
    table-layout: fixed;
    width: 844px;
    margin-top: 13px;
    border: 3px double #000;
}

.w44 { width: 44px; }
.w57 { width: 57px; }
.w64 { width: 64px; }
.w66 { width: 66px; }
.w70 { width: 70px; }
.w71 { width: 71px; }
.w73 { width: 73px; }
.w76 { width: 76px; }
.w83 { width: 83px; }
.w120 { width: 120px; }
.w141 { width: 141px; }
.w184 { width: 184px; }
.w243 { width: 243px; }

.doc th, .doc td {
    padding: 0 1px;
    height: 15px;
    line-height: 14px;
    border: 1px solid #000;
    border-right: 3px double #000;
}

.doc th {
    font-size: 11px;
    font-weight: normal;
}

.doc td {
    vertical-align: top;
    text-align: left;
}

.doc .cut {
    overflow: hidden;
    text-align: left;
    padding-left: 15px;
}

.doc .cut.edge {
    padding-left: 5px;
}

.doc .thin {
    border-right: 1px solid #000;
}

.doc .thick {
    border-right: 2px solid #000;
}

.doc .top {
    vertical-align: top;
}

.doc .c {
    text-align: center;
}

.doc .r {
    text-align: right;
}

.supplier thead {
    border-bottom: 2px solid #000;
}

.supplier tbody td {
    height: 30px;
}

.goods .h2 th {
    height: 43px;
}

.goods .nums th {
    font-size: 10px;
    line-height: 12px;
}

.goods thead {
    border-bottom: 3px double #000;
}

.goods tbody {
    border-bottom: 3px double #000;
}

.goods tbody td, .goods tfoot td {
    height: 16px;
}

.goods {
    border-left: 0;
    border-bottom: 0;
}

.goods tr > :first-child:not(.total) {
    border-left: 3px double #000;
}

.goods tfoot td {
    border-bottom: 3px double #000;
}

.goods .total {
    border-bottom: 0;
    border-left: 0;
}

.signs {
    display: flex;
    margin-top: 14px;
    padding-left: 21px;
}

.who {
    flex: none;
    width: 46px;
}

.who.give {
    width: 32px;
    margin-left: 106px;
}

.sign {
    margin-top: 14px;
    border-top: 1px solid #000;
    font-size: 9px;
    line-height: 13px;
    text-align: center;
    flex: none;
}

.s1 { width: 113px; }
.s2 { width: 112px; margin-left: 8px; }
.s3 { width: 108px; margin-left: 25px; }
.s4 { width: 115px; }
.s5 { width: 115px; margin-left: 8px; }

/* Message panel */
.messages {
    display: flex;
    flex: none;
    gap: 3px;
    height: 35px;
    padding: 4px 2px 3px 5px;
    border-top: 2px solid #202020;
    border-bottom: 1px solid #808080;
}

.dock-btns {
    display: flex;
    flex-direction: column;
    gap: 2px;
}

.dock-btns button {
    width: 11px;
    height: 11px;
    border: 1px solid;
    border-color: #fff #404040 #404040 #fff;
}

.dock-btns svg {
    width: 8px;
    height: 8px;
}

.log {
    flex: 1;
    border: 1px solid;
    border-color: #404040 #fff #fff #404040;
    border-left-width: 2px;
}

.log .line {
    height: 8px;
    background: linear-gradient(to right, #c0c0c0 19px, #fff 19px);
}

.log .thumb {
    width: 168px;
}

/* Bottom bars */
.drawing {
    height: 31px;
    border-bottom: 1px solid #808080;
}

.drawing .band {
    border-bottom: 0;
}

.windows-bar {
    display: flex;
    flex: none;
    gap: 4px;
    height: 28px;
    padding: 3px 2px;
    border-top: 2px solid #fff;
    border-bottom: 1px solid #808080;
}

.wtab {
    display: flex;
    align-items: center;
    gap: 1px;
    width: 166px;
    height: 21px;
    padding: 0 1px;
    border: 1px solid;
    border-color: #fff #404040 #404040 #fff;
    box-shadow: inset -1px -1px #808080;
}

.wtab.active {
    font-weight: bold;
    border-color: #404040 #fff #fff #404040;
    box-shadow: inset 1px 1px #808080;
    background: #dedbd5;
}

.status {
    display: flex;
    flex: none;
    align-items: center;
    gap: 2px;
    height: 23px;
    padding: 0 1px 0 2px;
    border-top: 1px solid #fff;
}

.hint {
    width: 505px;
}

.cell {
    height: 17px;
    padding: 0 1px;
    border: 1px solid;
    border-color: #808080 #fff #fff #808080;
}

.c1 { width: 26px; }
.c2 { width: 28px; }
.c3 { width: 151px; }
.c4 { flex: 1; }
```
